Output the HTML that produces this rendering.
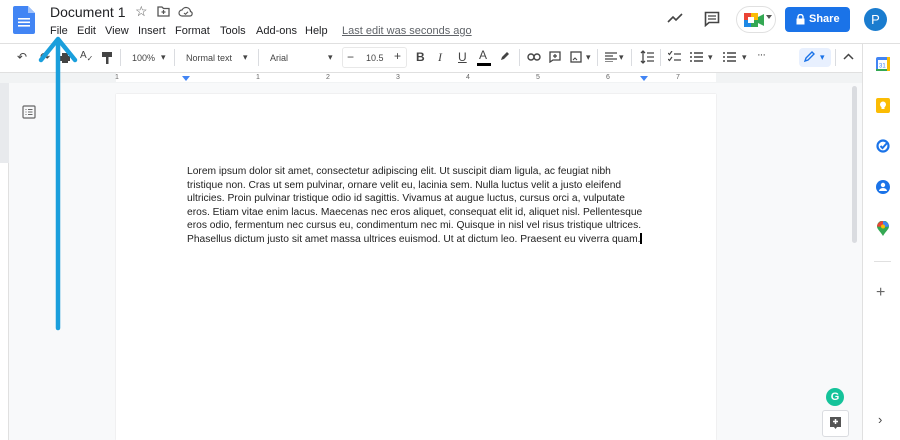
<!DOCTYPE html>
<html><head><style>
*{margin:0;padding:0;box-sizing:border-box}
body{width:900px;height:440px;overflow:hidden;background:#f8f9fa;font-family:"Liberation Sans",Arial,sans-serif;position:relative;color:#3c4043}
.a{position:absolute}
.menu span{position:absolute;top:25px;font-size:11px;color:#202124}
.tb{font-size:9px;color:#444}
.ico{position:absolute;top:50px;font-size:12px;color:#444}
.sep{position:absolute;top:49px;width:1px;height:17px;background:#dadce0}
.txt{position:absolute;left:187px;top:165px;font-size:10.25px;line-height:13.6px;color:#222;white-space:nowrap}
</style></head><body>
<div class="a" style="left:0;top:0;width:900px;height:44px;background:#fff;border-bottom:1px solid #e0e0e0"></div>
<svg class="a" style="left:13px;top:6px" width="22" height="28" viewBox="0 0 22 28"><path d="M2 0h13l7 7v19a2 2 0 0 1-2 2H2a2 2 0 0 1-2-2V2a2 2 0 0 1 2-2z" fill="#4285f4"/><path d="M15 0v7h7z" fill="#a1c2fa"/><rect x="5" y="12" width="12" height="1.6" fill="#fff"/><rect x="5" y="15.5" width="12" height="1.6" fill="#fff"/><rect x="5" y="19" width="12" height="1.6" fill="#fff"/></svg>
<div class="a" style="left:50px;top:4px;font-size:14px;color:#202124">Document 1</div>
<div class="a" style="left:135px;top:3px;font-size:14px;color:#555">☆</div>
<svg class="a" style="left:157px;top:6px" width="13" height="11"><path d="M1 1h4l1.5 1.5H12V10H1z" fill="none" stroke="#555" stroke-width="1.3"/><path d="M6.5 4v4M4.5 6h4" stroke="#555" stroke-width="1.2"/></svg>
<svg class="a" style="left:178px;top:6px" width="15" height="11"><path d="M4 10a3 3 0 0 1 0-6 4.5 4.5 0 0 1 8.5 1.5A2.3 2.3 0 0 1 12 10z" fill="none" stroke="#555" stroke-width="1.2"/><path d="M6 7l1.5 1.3L10 5.8" fill="none" stroke="#555" stroke-width="1.1"/></svg>
<div class="menu">
<span style="left:50px">File</span><span style="left:77px">Edit</span><span style="left:105px">View</span><span style="left:138px">Insert</span><span style="left:175px">Format</span><span style="left:220px">Tools</span><span style="left:256px">Add-ons</span><span style="left:305px">Help</span>
<span style="left:342px;color:#5f6368;text-decoration:underline">Last edit was seconds ago</span>
</div>
<svg class="a" style="left:667px;top:12px" width="17" height="12"><path d="M1 10l5-5 3 3 6-6" fill="none" stroke="#444" stroke-width="1.6"/></svg>
<svg class="a" style="left:704px;top:11px" width="17" height="16"><path d="M1.5 1.5h13v10H5l-3.5 3z" fill="none" stroke="#444" stroke-width="1.6"/><path d="M4 5h8M4 8h8" stroke="#444" stroke-width="1.2"/></svg>
<div class="a" style="left:736px;top:6px;width:40px;height:27px;border:1px solid #e0e0e0;border-radius:14px;background:#fff"></div>
<svg class="a" style="left:744px;top:13px" width="20" height="14"><rect x="0" y="0" width="7" height="7" fill="#ea4335"/><rect x="7" y="0" width="7" height="7" fill="#fbbc04"/><rect x="0" y="7" width="7" height="7" fill="#1e88e5"/><rect x="7" y="7" width="7" height="7" fill="#34a853"/><rect x="4" y="4" width="6" height="6" fill="#fff"/><path d="M14 4l6-3v12l-6-3z" fill="#34a853"/></svg>
<div class="a" style="left:766px;top:15px;width:0;height:0;border-left:3px solid transparent;border-right:3px solid transparent;border-top:4px solid #555"></div>
<div class="a" style="left:785px;top:7px;width:65px;height:25px;background:#1a73e8;border-radius:4px;color:#fff;font-size:11px;font-weight:bold;line-height:25px;padding-left:24px">Share</div>
<svg class="a" style="left:796px;top:14px" width="9" height="11"><rect x="0.5" y="4.5" width="8" height="6" fill="#fff"/><path d="M2 5V3a2.5 2.5 0 0 1 5 0v2" fill="none" stroke="#fff" stroke-width="1.4"/></svg>
<div class="a" style="left:864px;top:8px;width:23px;height:23px;border-radius:50%;background:#1a7ccf;color:#fff;font-size:13px;text-align:center;line-height:23px">P</div>
<div class="a" style="left:0;top:44px;width:862px;height:28px;background:#fff"></div>
<span class="ico" style="left:17px">↶</span><span class="ico" style="left:40px">↷</span>
<svg class="a" style="left:59px;top:52px" width="12" height="12"><rect x="1" y="4" width="10" height="5" fill="#444"/><rect x="3" y="1" width="6" height="3" fill="#444"/><rect x="3" y="8" width="6" height="3" fill="#444"/></svg>
<span class="ico" style="left:80px;font-size:10px">A<sub style="font-size:8px">✓</sub></span>
<svg class="a" style="left:102px;top:52px" width="10" height="12"><rect x="0" y="0" width="10" height="5" fill="#444"/><rect x="4" y="5" width="2.5" height="7" fill="#444"/></svg>
<div class="sep" style="left:120px"></div>
<span class="a tb" style="left:132px;top:53px">100%</span><span class="a tb" style="left:161px;top:52px">▾</span>
<div class="sep" style="left:174px"></div>
<span class="a tb" style="left:186px;top:53px">Normal text</span><span class="a tb" style="left:243px;top:52px">▾</span>
<div class="sep" style="left:258px"></div>
<span class="a tb" style="left:270px;top:53px">Arial</span><span class="a tb" style="left:328px;top:52px">▾</span>
<div class="a" style="left:342px;top:47px;width:65px;height:21px;border:1px solid #e8e8e8;border-radius:3px"></div>
<span class="a" style="left:347px;top:50px;font-size:12px;color:#444">−</span>
<span class="a tb" style="left:366px;top:53px">10.5</span>
<span class="a" style="left:394px;top:49px;font-size:12px;color:#444">+</span>
<span class="a" style="left:416px;top:50px;font-size:12px;font-weight:bold;color:#444">B</span>
<span class="a" style="left:438px;top:50px;font-size:12px;font-style:italic;font-family:'Liberation Serif',serif;color:#444">I</span>
<span class="a" style="left:458px;top:50px;font-size:12px;text-decoration:underline;color:#444">U</span>
<span class="a" style="left:479px;top:48px;font-size:12px;color:#444">A</span>
<div class="a" style="left:477px;top:63px;width:14px;height:3px;background:#000"></div>
<svg class="a" style="left:499px;top:50px" width="12" height="12"><path d="M2 10l1-3 5-5 2 2-5 5z" fill="#444"/></svg>
<div class="sep" style="left:519px"></div>
<svg class="a" style="left:527px;top:53px" width="14" height="8"><rect x="1" y="1" width="6" height="6" rx="3" fill="none" stroke="#444" stroke-width="1.4"/><rect x="7" y="1" width="6" height="6" rx="3" fill="none" stroke="#444" stroke-width="1.4"/></svg>
<svg class="a" style="left:549px;top:51px" width="12" height="12"><path d="M1 1h10v8H4l-3 2z" fill="none" stroke="#444" stroke-width="1.3"/><path d="M6 3v4M4 5h4" stroke="#444" stroke-width="1.2"/></svg>
<svg class="a" style="left:570px;top:51px" width="12" height="12"><rect x="1" y="1" width="10" height="10" fill="none" stroke="#444" stroke-width="1.3"/><path d="M3 9l2-2 2 2" stroke="#444" fill="none"/></svg>
<span class="a tb" style="left:586px;top:52px">▾</span>
<div class="sep" style="left:597px"></div>
<svg class="a" style="left:605px;top:52px" width="12" height="10"><path d="M0 1h12M0 4h8M0 7h12M0 10h8" stroke="#444" stroke-width="1.3"/></svg>
<span class="a tb" style="left:619px;top:52px">▾</span>
<div class="sep" style="left:631px"></div>
<svg class="a" style="left:640px;top:50px" width="14" height="14"><path d="M3 1v12M1 3l2-2 2 2M1 11l2 2 2-2M7 3h7M7 7h7M7 11h7" stroke="#444" stroke-width="1.3" fill="none"/></svg>
<div class="sep" style="left:660px"></div>
<svg class="a" style="left:668px;top:51px" width="13" height="12"><path d="M0 2l1.5 1.5L4 0M0 8l1.5 1.5L4 6M6 3h7M6 9h7" stroke="#444" stroke-width="1.2" fill="none"/></svg>
<svg class="a" style="left:690px;top:51px" width="13" height="12"><path d="M0 2h2M0 6h2M0 10h2M4 2h9M4 6h9M4 10h9" stroke="#444" stroke-width="1.4"/></svg>
<span class="a tb" style="left:708px;top:52px">▾</span>
<svg class="a" style="left:723px;top:51px" width="13" height="12"><path d="M0 2h2M0 6h2M0 10h2M4 2h9M4 6h9M4 10h9" stroke="#444" stroke-width="1.4"/></svg>
<span class="a tb" style="left:742px;top:52px">▾</span>
<span class="a" style="left:757px;top:49px;font-size:11px;color:#444;letter-spacing:-1px">···</span>
<div class="a" style="left:799px;top:48px;width:32px;height:19px;background:#e8f0fe;border-radius:4px"></div>
<svg class="a" style="left:803px;top:51px" width="12" height="12"><path d="M2 10l1-3 6-6 2 2-6 6z" fill="none" stroke="#1a73e8" stroke-width="1.4"/></svg>
<span class="a" style="left:820px;top:52px;font-size:9px;color:#1a73e8">▾</span>
<div class="sep" style="left:835px"></div>
<svg class="a" style="left:843px;top:53px" width="11" height="7"><path d="M1 6l4.5-4.5L10 6" fill="none" stroke="#444" stroke-width="1.5"/></svg>
<div class="a" style="left:0;top:72px;width:862px;height:11px;background:#f1f3f4;border-top:1px solid #e0e0e0"></div>
<div class="a" style="left:116px;top:73px;width:600px;height:9px;background:#fff"></div>
<div class="a" style="left:115px;top:74px;font-size:7px;color:#666;width:600px;white-space:nowrap">1<span style="position:absolute;left:141px">1</span><span style="position:absolute;left:211px">2</span><span style="position:absolute;left:281px">3</span><span style="position:absolute;left:351px">4</span><span style="position:absolute;left:421px">5</span><span style="position:absolute;left:491px">6</span><span style="position:absolute;left:561px">7</span></div>
<div class="a" style="left:182px;top:76px;width:0;height:0;border-left:4px solid transparent;border-right:4px solid transparent;border-top:5px solid #4285f4"></div>
<div class="a" style="left:640px;top:76px;width:0;height:0;border-left:4px solid transparent;border-right:4px solid transparent;border-top:5px solid #4285f4"></div>
<div class="a" style="left:0;top:83px;width:9px;height:357px;background:#fff;border-right:1px solid #e0e0e0"></div>
<div class="a" style="left:0;top:83px;width:9px;height:80px;background:#e8eaed"></div>
<svg class="a" style="left:22px;top:105px" width="14" height="14"><rect x="1" y="1" width="12" height="12" rx="1" fill="none" stroke="#666" stroke-width="1.2"/><path d="M3.5 4.5h1M6 4.5h4.5M3.5 7h1M6 7h4.5M3.5 9.5h1M6 9.5h4.5" stroke="#666" stroke-width="1.1"/></svg>
<div class="a" style="left:116px;top:94px;width:600px;height:346px;background:#fff;box-shadow:0 0 1px #ccc"></div>
<div class="txt">Lorem ipsum dolor sit amet, consectetur adipiscing elit. Ut suscipit diam ligula, ac feugiat nibh<br>tristique non. Cras ut sem pulvinar, ornare velit eu, lacinia sem. Nulla luctus velit a justo eleifend<br>ultricies. Proin pulvinar tristique odio id sagittis. Vivamus at augue luctus, cursus orci a, vulputate<br>eros. Etiam vitae enim lacus. Maecenas nec eros aliquet, consequat elit id, aliquet nisl. Pellentesque<br>eros odio, fermentum nec cursus eu, condimentum nec mi. Quisque in nisl vel risus tristique ultrices.<br>Phasellus dictum justo sit amet massa ultrices euismod. Ut at dictum leo. Praesent eu viverra quam.</div>
<div class="a" style="left:640px;top:233px;width:1.5px;height:11px;background:#000"></div>
<div class="a" style="left:852px;top:86px;width:5px;height:157px;background:#dadce0;border-radius:3px"></div>
<div class="a" style="left:862px;top:44px;width:38px;height:396px;background:#fff;border-left:1px solid #e0e0e0"></div>
<svg class="a" style="left:876px;top:57px" width="14" height="14"><rect width="14" height="14" rx="2" fill="#4285f4"/><rect x="2" y="3" width="10" height="9" fill="#fff"/><rect x="11" y="0" width="3" height="14" fill="#fbbc04"/><rect x="0" y="12" width="11" height="2" fill="#34a853"/><text x="3" y="10.5" font-size="6" fill="#4285f4" font-family="Liberation Sans">31</text></svg>
<svg class="a" style="left:876px;top:98px" width="14" height="15"><rect width="14" height="15" rx="2" fill="#fbbc04"/><circle cx="7" cy="6.5" r="3" fill="#fff"/><rect x="5.5" y="9" width="3" height="2" fill="#fff"/></svg>
<svg class="a" style="left:876px;top:139px" width="14" height="14"><circle cx="7" cy="7" r="5.5" fill="none" stroke="#1a73e8" stroke-width="2.2"/><path d="M4.5 7l2 2 5-5.5" fill="none" stroke="#1a73e8" stroke-width="2"/></svg>
<svg class="a" style="left:876px;top:180px" width="14" height="14"><circle cx="7" cy="7" r="7" fill="#1a73e8"/><circle cx="7" cy="5" r="2.2" fill="#fff"/><path d="M3 11a4 3 0 0 1 8 0z" fill="#fff"/></svg>
<svg class="a" style="left:877px;top:221px" width="12" height="15"><path d="M6 15C3 10 0 8 0 5.5a6 6 0 0 1 12 0C12 8 9 10 6 15z" fill="#34a853"/><path d="M6 0a6 6 0 0 1 6 5.5L6 6z" fill="#4285f4"/><path d="M0 5.5A6 6 0 0 1 6 0v6z" fill="#ea4335"/><circle cx="6" cy="5.5" r="2" fill="#fbbc04"/></svg>
<div class="a" style="left:874px;top:261px;width:17px;height:1px;background:#e0e0e0"></div>
<div class="a" style="left:876px;top:284px;font-size:16px;color:#666">+</div>
<div class="a" style="left:878px;top:412px;font-size:13px;color:#444">›</div>
<div class="a" style="left:826px;top:388px;width:18px;height:18px;border-radius:50%;background:#15c39a;color:#fff;font-size:11px;font-weight:bold;text-align:center;line-height:18px">G</div>
<div class="a" style="left:822px;top:410px;width:27px;height:27px;border:1px solid #dadce0;border-radius:3px;background:#fff"></div>
<svg class="a" style="left:829px;top:416px" width="13" height="14"><path d="M1 1h11v10H8l-1.5 2L5 11H1z" fill="#555"/><path d="M6.5 3v5M4 5.5h5" stroke="#fff" stroke-width="1.5"/></svg>
<svg class="a" style="left:0;top:0" width="120" height="340"><path d="M58 40V328" stroke="#1a9fdc" stroke-width="4.5" stroke-linecap="round"/><path d="M41 60L58 39L75 60" fill="none" stroke="#1a9fdc" stroke-width="4.5" stroke-linecap="round" stroke-linejoin="round"/></svg>
</body></html>
